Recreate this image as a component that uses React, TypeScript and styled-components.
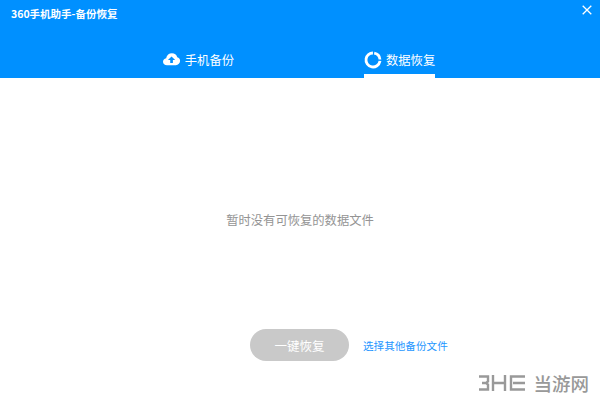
import React from "react";
import styled, { createGlobalStyle } from "styled-components";

const GlobalStyle = createGlobalStyle`
  html, body {
    margin: 0;
    padding: 0;
    background: #fff;
    font-family: "Noto Sans CJK SC", "Noto Sans", sans-serif;
  }
`;

const Page = styled.div`
  position: relative;
  width: 600px;
  height: 406px;
  overflow: hidden;
  display: flex;
  flex-direction: column;
  background: #fff;
`;

const Header = styled.div`
  height: 78px;
  flex: none;
  background: #0090ff;
  display: flex;
  flex-direction: column;
  justify-content: space-between;
`;

const TitleBar = styled.div`
  display: flex;
  justify-content: space-between;
  align-items: flex-start;
  padding: 5px 8px 0 11px;
`;

const Title = styled.div`
  font-size: 10.5px;
  line-height: 18px;
  font-weight: 700;
  color: #fff;
`;

const CloseButton = styled.button`
  width: 10px;
  height: 10px;
  padding: 0;
  border: 0;
  background: none;
  display: flex;
`;

const Tabs = styled.div`
  display: flex;
  justify-content: center;
  gap: 130px;
  padding-right: 2px;
`;

const Tab = styled.div<{ $active?: boolean }>`
  height: 28px;
  box-sizing: content-box;
  display: flex;
  align-items: center;
  gap: 4px;
  color: #fff;
  font-size: 12.3px;
  border-bottom: 4px solid ${(p) => (p.$active ? "#fff" : "transparent")};
`;

const Body = styled.div`
  flex: 1;
  display: flex;
  flex-direction: column;
`;

const Message = styled.div`
  margin-top: 132px;
  text-align: center;
  font-size: 12.3px;
  line-height: 20px;
  color: #949494;
`;

const Actions = styled.div`
  margin-top: 99px;
  padding-left: 250px;
  display: flex;
  align-items: center;
  gap: 14px;
`;

const RestoreButton = styled.button`
  width: 99px;
  height: 32px;
  padding: 0;
  border: 0;
  border-radius: 16px;
  background: #c9c9c9;
  color: #fff;
  font-family: inherit;
  font-size: 12.5px;
`;

const OtherFileLink = styled.a`
  color: #1e96ff;
  font-size: 10.6px;
  text-decoration: none;
`;

const Watermark = styled.div`
  position: absolute;
  right: 11px;
  bottom: 13px;
  display: flex;
  align-items: center;
  gap: 7px;
  color: #999;
  font-size: 18.5px;
  line-height: 20px;
  font-weight: 500;
`;

const CloudIcon = () => (
  <svg width="18" height="18" viewBox="0 -2 18 18">
    <path
      fill="#fff"
      fillRule="evenodd"
      transform="scale(0.95 0.9)"
      d="M4.2 13.5C1.9 13.5 0 11.8 0 9.6c0-2 1.4-3.5 3.3-3.8C3.8 2.5 6.4 0.3 9.4 0.3c2.7 0 5 1.8 5.6 4.4 1.8 0.4 3 2 3 3.9 0 2.7-2 4.9-4.5 4.9H4.2zM9 3.9L5.2 7.8h2.4v3.2h2.8V7.8h2.4L9 3.9z"
    />
  </svg>
);

const RestoreIcon = () => (
  <svg width="18" height="18" viewBox="0 0 18 18" fill="none" stroke="#fff" strokeWidth="2.8">
    <circle
      cx="9"
      cy="9"
      r="7"
      pathLength={100}
      strokeDasharray="21 3 73 3"
      transform="rotate(-80 9 9)"
    />
  </svg>
);

const CloseIcon = () => (
  <svg width="10" height="10" viewBox="0 0 10 10" stroke="#fff" strokeWidth="1.3">
    <path d="M0.7 0.7l8.6 8.6M9.3 0.7l-8.6 8.6" />
  </svg>
);

const WatermarkLogo = () => (
  <svg width="47" height="16" viewBox="0 0 47 16" fill="none" stroke="#999" strokeWidth="2.4">
    <path d="M0 1.5h9v5l-2 1.5 2 1.5v5H0M3 8h4" />
    <path d="M14 0v16M26 0v16M14 8h12" />
    <path d="M46 1.5H32v13h14M34 8h12" />
  </svg>
);

export default function App() {
  return (
    <Page>
      <GlobalStyle />
      <Header>
        <TitleBar>
          <Title>360手机助手-备份恢复</Title>
          <CloseButton>
            <CloseIcon />
          </CloseButton>
        </TitleBar>
        <Tabs>
          <Tab>
            <CloudIcon />
            手机备份
          </Tab>
          <Tab $active>
            <RestoreIcon />
            数据恢复
          </Tab>
        </Tabs>
      </Header>
      <Body>
        <Message>暂时没有可恢复的数据文件</Message>
        <Actions>
          <RestoreButton>一键恢复</RestoreButton>
          <OtherFileLink>选择其他备份文件</OtherFileLink>
        </Actions>
      </Body>
      <Watermark>
        <WatermarkLogo />
        当游网
      </Watermark>
    </Page>
  );
}
